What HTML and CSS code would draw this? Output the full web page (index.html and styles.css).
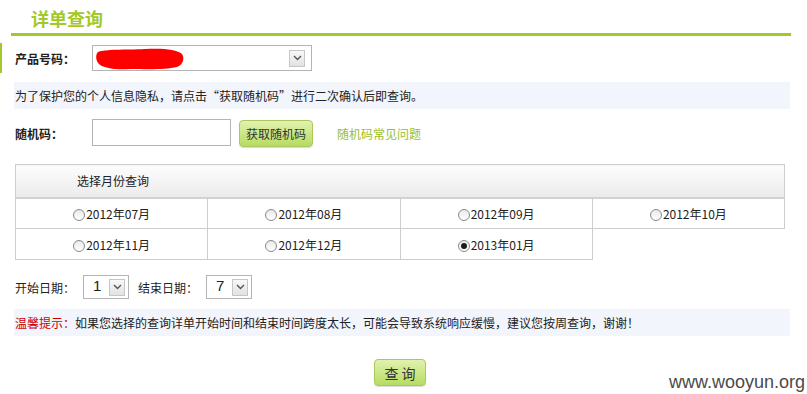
FILE: index.html
```html
<!DOCTYPE html>
<html lang="zh-CN">
	<head>
		<meta charset="utf-8" />
		<title>详单查询</title>
		<link rel="stylesheet" href="styles.css">
	</head>
	<body>
		<div class="page">
			<div class="head"><h1>详单查询</h1></div>

			<div class="form">
				<div class="row row-product">
					<label class="lbl">产品号码：</label>
					<div class="select select-product">
						<svg class="scribble" width="90" height="22" viewBox="0 0 90 22">
							<path d="M3 4 C10 1 30 2 50 1 C66 0 82 1 87 6 C90 10 88 17 82 19 C70 22 50 21 35 21 C20 22 8 20 4 16 C1 13 0 7 3 4 Z" fill="#ff0000"/>
						</svg>
						<span class="arrow"><svg width="9" height="6" viewBox="0 0 9 6"><path d="M1 1 L4.5 4.5 L8 1" fill="none" stroke="#555" stroke-width="1.4"/></svg></span>
					</div>
				</div>

				<div class="notice">为了保护您的个人信息隐私，请点击“获取随机码”进行二次确认后即查询。</div>

				<div class="row row-code">
					<label class="lbl">随机码：</label>
					<input class="code-input" type="text" />
					<button class="btn btn-code">获取随机码</button>
					<a class="faq" href="#">随机码常见问题</a>
				</div>

				<table class="months">
					<tr>
						<th colspan="4">选择月份查询</th>
					</tr>
					<tr>
						<td><span class="radio"></span>2012年07月</td>
						<td><span class="radio"></span>2012年08月</td>
						<td><span class="radio"></span>2012年09月</td>
						<td><span class="radio"></span>2012年10月</td>
					</tr>
					<tr>
						<td><span class="radio"></span>2012年11月</td>
						<td><span class="radio"></span>2012年12月</td>
						<td><span class="radio checked"></span>2013年01月</td>
						<td class="empty"></td>
					</tr>
				</table>

				<div class="row row-date">
					<label>开始日期：</label>
					<div class="select select-day">
						<span class="val">1</span>
						<span class="arrow"><svg width="9" height="6" viewBox="0 0 9 6"><path d="M1 1 L4.5 4.5 L8 1" fill="none" stroke="#555" stroke-width="1.4"/></svg></span>
					</div>
					<label class="lbl-end">结束日期：</label>
					<div class="select select-day">
						<span class="val">7</span>
						<span class="arrow"><svg width="9" height="6" viewBox="0 0 9 6"><path d="M1 1 L4.5 4.5 L8 1" fill="none" stroke="#555" stroke-width="1.4"/></svg></span>
					</div>
				</div>

				<div class="notice tip"><span class="warn">温馨提示：</span>如果您选择的查询详单开始时间和结束时间跨度太长，可能会导致系统响应缓慢，建议您按周查询，谢谢！</div>

				<div class="actions">
					<button class="btn btn-query">查 询</button>
				</div>
			</div>

			<div class="mark">www.wooyun.org</div>
		</div>
	</body>
</html>
```

FILE: styles.css
```css
* {
	box-sizing: border-box;
}
body {
	margin: 0;
	background: #fff;
	color: #222;
	font-family: "Noto Sans CJK SC", "Liberation Sans", sans-serif;
	font-size: 12px;
}
.page {
	position: relative;
	width: 807px;
	height: 394px;
	overflow: hidden;
}
.head {
	margin: 0 16px 0 11px;
	height: 36px;
	border-bottom: 3px solid #a2c928;
}
.head h1 {
	margin: 0;
	padding: 7px 0 0 20px;
	font-size: 18px;
	line-height: 22px;
	color: #a2c928;
	font-weight: bold;
}
.form {
	padding: 0 17px 0 15px;
}
.row {
	display: flex;
	align-items: center;
}
.lbl {
	font-weight: bold;
	width: 77px;
}
.row-product {
	margin: 7px 0 0 -15px;
	height: 30px;
	padding-left: 13px;
	border-left: 2px solid #a2c928;
}
.select {
	display: flex;
	align-items: center;
	background: #fff;
	border: 1px solid #b4b4b4;
}
.select-product {
	width: 220px;
	height: 26px;
	padding: 0 6px 0 2px;
}
.scribble {
	display: block;
	margin-top: 1px;
}
.arrow {
	margin-left: auto;
	display: flex;
	align-items: center;
	justify-content: center;
	width: 16px;
	height: 17px;
	border: 1px solid #c6c6c6;
	background: linear-gradient(#f8f8f8, #e2e2e2);
}
.notice {
	margin: 9px 0 0 -1px;
	height: 27px;
	line-height: 27px;
	padding-left: 1px;
	background: #f3f5fc;
}
.row-code {
	margin-top: 10px;
	height: 28px;
}
.code-input {
	width: 139px;
	height: 27px;
	margin: 0 0 0 0;
	border: 1px solid #b4b4b4;
	align-self: flex-start;
}
.btn {
	font-family: inherit;
	color: #333;
	border: 1px solid #a9c960;
	border-radius: 4px;
	background: linear-gradient(#e2f2ae, #b6dc62);
	box-shadow: 0 1px 1px rgba(0, 0, 0, 0.15);
	padding: 0;
	cursor: pointer;
}
.btn-code {
	margin-left: 8px;
	width: 74px;
	height: 27px;
	font-size: 12px;
	align-self: flex-end;
}
.faq {
	margin-left: 24px;
	color: #9cbe1f;
	text-decoration: none;
}
.months {
	margin-top: 17px;
	width: 770px;
	border-collapse: collapse;
	table-layout: fixed;
}
.months th {
	height: 33px;
	text-align: left;
	font-weight: normal;
	padding-left: 61px;
	border: 1px solid #cdcdcd;
	border-bottom: 2px solid #d2d2d2;
	background: linear-gradient(#fdfdfd, #ebebeb);
}
.months td {
	height: 31px;
	text-align: center;
	border: 1px solid #cdcdcd;
	padding: 0;
}
.months td.empty {
	border: none;
	border-left: 1px solid #cdcdcd;
}
.radio {
	display: inline-block;
	width: 12px;
	height: 12px;
	margin-right: 1px;
	vertical-align: -2px;
	border: 1px solid #8a8a8a;
	border-radius: 50%;
	background: linear-gradient(#e9e9e9, #fff);
	position: relative;
}
.radio.checked::after {
	content: "";
	position: absolute;
	left: 2px;
	top: 2px;
	width: 6px;
	height: 6px;
	border-radius: 50%;
	background: #1a1a1a;
}
.row-date {
	margin-top: 15px;
	height: 24px;
}
.row-date label {
	width: 68px;
}
.row-date .lbl-end {
	margin-left: 9px;
}
.select-day {
	width: 46px;
	height: 24px;
	padding: 0 3px 0 9px;
}
.select-day .val {
	font-family: "Liberation Sans", sans-serif;
	font-size: 15px;
	line-height: 1;
	margin-top: -3px;
}
.tip {
	margin-top: 10px;
}
.warn {
	color: #cc0000;
}
.actions {
	display: flex;
	justify-content: center;
	padding-right: 5px;
	margin-top: 23px;
}
.btn-query {
	width: 52px;
	height: 27px;
	font-size: 14px;
}
.mark {
	position: absolute;
	right: 2px;
	bottom: 1px;
	font-family: "Liberation Sans", sans-serif;
	font-size: 18px;
	color: #4a4a4a;
}
```
